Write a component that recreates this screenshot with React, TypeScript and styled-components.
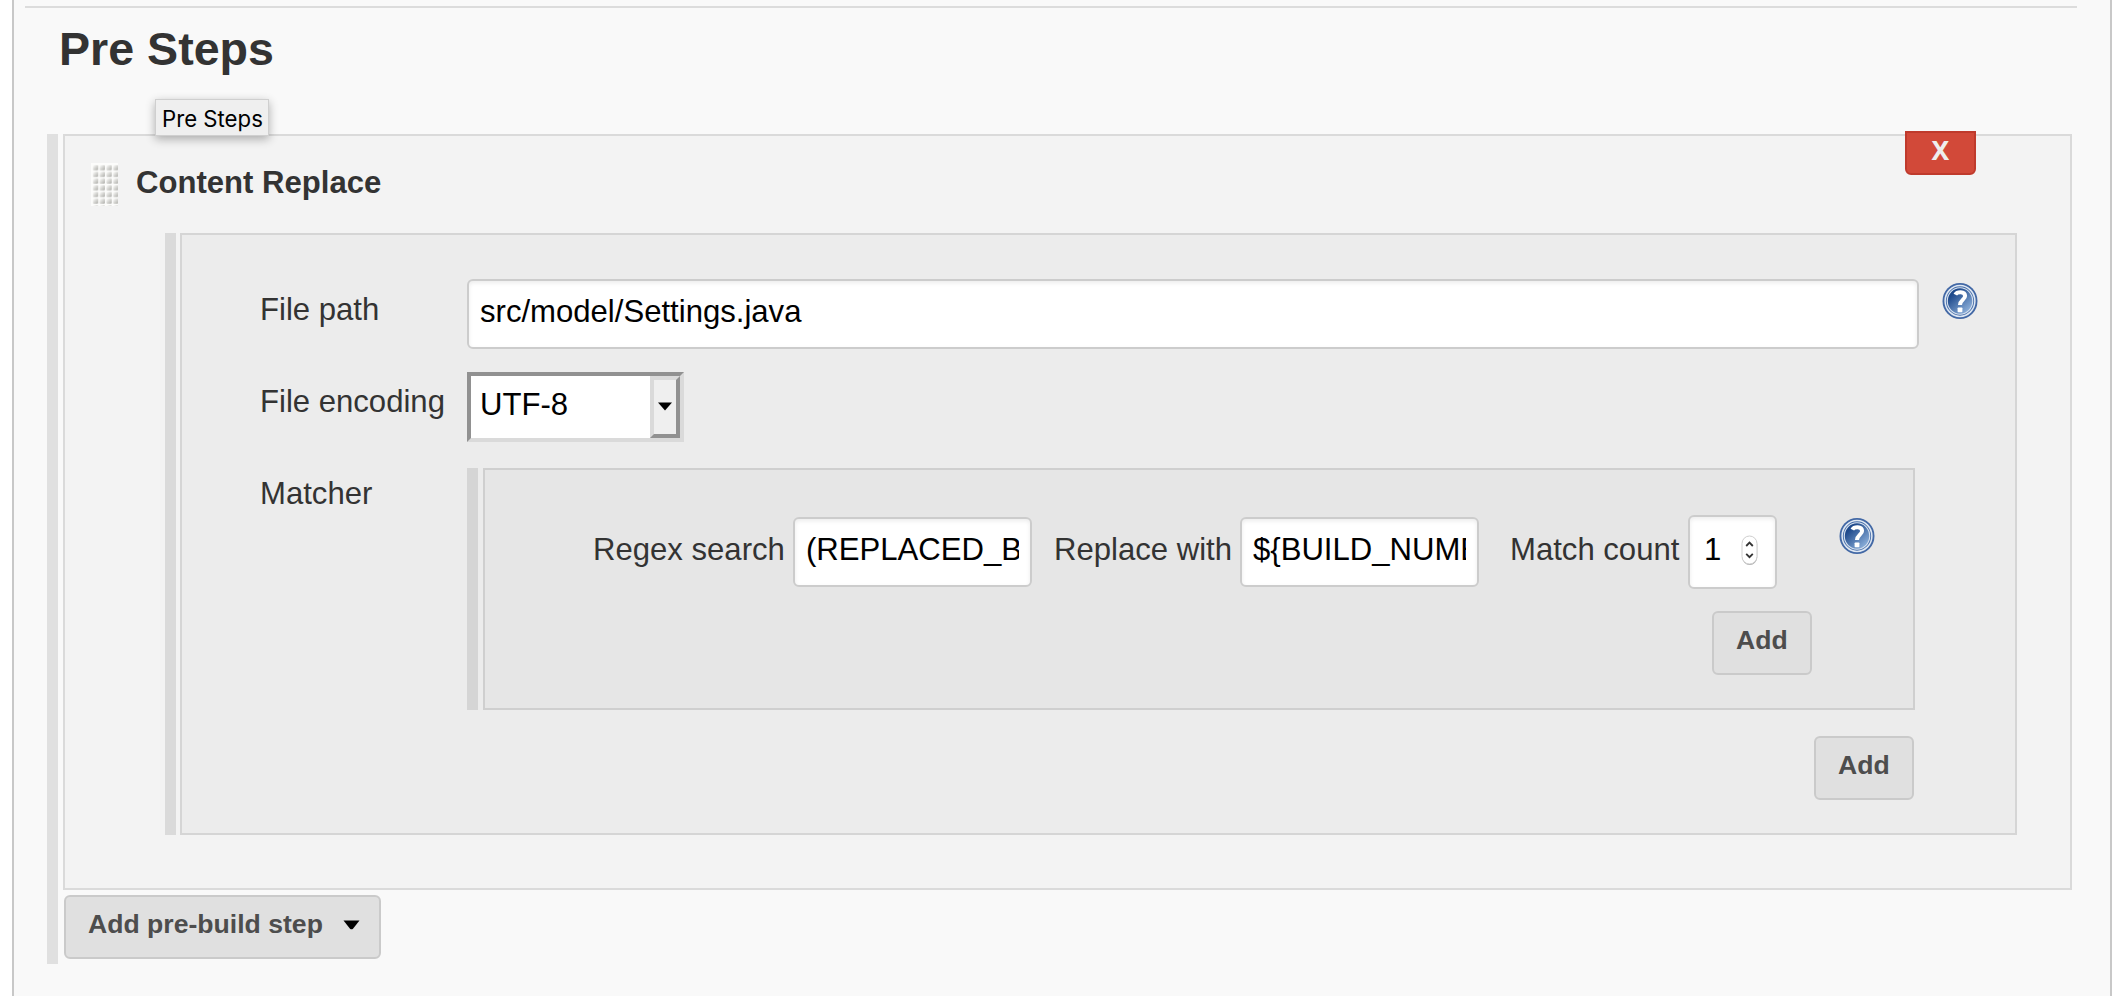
import React from "react";
import styled, { createGlobalStyle } from "styled-components";

const GlobalStyle = createGlobalStyle`
  *, *::before, *::after { box-sizing: border-box; }
  body {
    margin: 0;
    background: #fff;
    color: #333;
    font-family: "Liberation Sans", Helvetica, Arial, sans-serif;
    font-size: 31.1px;
    line-height: 36px;
    overflow: hidden;
  }
`;

const Page = styled.main`
  height: 996px;
  margin-left: 12px;
  padding: 6px 33px 0 11px;
  border: solid #c8c8c8;
  border-width: 0 2px;
  background: #f9f9f9;
`;

const SectionHeader = styled.header`
  position: relative;
  height: 128px;
  padding: 14px 0 0 34px;
  border-top: 2px solid #dcdcdc;
`;

const Title = styled.h1`
  margin: 0;
  font-size: 46.6px;
  line-height: 54px;
`;

const Tooltip = styled.div`
  position: absolute;
  z-index: 2;
  top: 91px;
  left: 130px;
  width: 114px;
  height: 37px;
  padding-left: 6px;
  border: 1px solid #cfcfcf;
  background: #efefef;
  box-shadow: 0 3px 9px rgba(0, 0, 0, 0.3);
  color: #000;
  font: 22.2px/37px Inter, sans-serif;
  white-space: nowrap;
`;

const Steps = styled.section`
  width: 2025px;
  height: 830px;
  margin-left: 22px;
  padding-left: 5px;
  border-left: 11px solid #e0e0e0;
`;

const StepCard = styled.article`
  position: relative;
  height: 756px;
  border: 2px solid #dadada;
  background: #f3f3f3;
`;

const DeleteButton = styled.button`
  position: absolute;
  top: -5px;
  right: 94px;
  width: 71px;
  height: 44px;
  padding: 0 0 6px;
  border: 2px solid #bf3a2c;
  border-radius: 0 0 6px 6px;
  background: #d24939;
  color: #eee;
  font: bold 26.5px/34px "Noto Sans", sans-serif;
`;

const StepHeader = styled.div`
  display: flex;
  height: 97px;
  padding: 27px 0 0 26px;
`;

const StepName = styled.h2`
  margin: 2px 0 0 18px;
  font-size: 31.1px;
  line-height: 36px;
`;

const Nested = styled.div<{ $bar: string; $gap: number }>`
  border-left: 11px solid ${(p) => p.$bar};
  padding-left: ${(p) => p.$gap}px;
`;

const NestedStep = styled(Nested)`
  width: 1852px;
  margin-left: 100px;
`;

const StepBody = styled.div`
  height: 602px;
  padding: 44px 0 0 78px;
  border: 2px solid #d5d5d5;
  background: #ececec;
`;

const FormRow = styled.div<{ $height: number }>`
  display: grid;
  grid-template-columns: 207px 1452px 1fr;
  align-items: start;
  height: ${(p) => p.$height}px;
`;

const Label = styled.span<{ $top: number }>`
  padding-top: ${(p) => p.$top}px;
`;

const TextInput = styled.input`
  display: block;
  width: 100%;
  height: 70px;
  padding: 0 11px 5px;
  border: 2px solid #ccc;
  border-radius: 6px;
  outline: none;
  background: #fff;
  box-shadow: inset 0 2px 4px rgba(0, 0, 0, 0.08);
  color: #000;
  font: 31.1px "Liberation Sans", Arial, sans-serif;
`;

const HelpSlot = styled.div`
  padding: 4px 0 0 23px;
  line-height: 0;
`;

const SelectBox = styled.div`
  display: flex;
  width: 217px;
  height: 70px;
  border: 4px solid;
  border-color: #919191 #dadada #dadada #919191;
  background: #fff;
  color: #000;
`;

const SelectValue = styled.span`
  flex: 1;
  padding: 11px 0 0 9px;
`;

const SelectArrow = styled.span`
  display: flex;
  align-items: center;
  justify-content: center;
  width: 30px;
  padding-bottom: 2px;
  border: 4px solid;
  border-color: #dadada #919191 #919191 #dadada;
  background: #efefef;
`;

const MatcherGroup = styled(Nested)`
  margin-right: 4px;
`;

const MatcherBody = styled.div`
  height: 242px;
  padding: 45px 0 0 108px;
  border: 2px solid #cfcfcf;
  background: #e6e6e6;
`;

const MatcherFields = styled.div`
  display: flex;
  height: 96px;
`;

const FieldLabel = styled.span<{ $width: number }>`
  width: ${(p) => p.$width}px;
  flex: none;
  padding-top: 17px;
  white-space: nowrap;
`;

const ShortInput = styled.div<{ $after: number }>`
  flex: none;
  width: 239px;
  margin: 2px ${(p) => p.$after}px 0 0;
`;

const NumberInput = styled.div`
  display: flex;
  flex: none;
  width: 89px;
  height: 74px;
  margin-right: 62px;
  padding: 15px 0 0 14px;
  border: 2px solid #ccc;
  border-radius: 6px;
  background: #fff;
  box-shadow: inset 0 2px 4px rgba(0, 0, 0, 0.08);
  color: #000;
`;

const Spinner = styled.svg`
  flex: none;
  margin: 3px 0 0 20px;
`;

const MatcherHelp = styled.div`
  padding-top: 3px;
  line-height: 0;
`;

const Button = styled.button<{ $width: number }>`
  display: flex;
  align-items: center;
  width: ${(p) => p.$width}px;
  height: 64px;
  padding: 0 0 5px 22px;
  border: 2px solid #cacaca;
  border-radius: 6px;
  background: #e0e0e0;
  color: #4d4d4d;
  font: bold 26.6px "Liberation Sans", Arial, sans-serif;
  white-space: nowrap;
`;

const ButtonLine = styled.div<{ $right: number; $top: number }>`
  display: flex;
  justify-content: flex-end;
  padding: ${(p) => p.$top}px ${(p) => p.$right}px 0 0;
`;

const AddStepLine = styled.div`
  padding: 5px 0 0 1px;
`;

const Caret = styled.svg`
  flex: none;
  margin: 1px 0 0 20px;
`;

const HelpIcon = () => (
  <svg width="36" height="36" viewBox="0 0 35 36">
    <defs>
      <linearGradient id="help-fill" x1="0.15" y1="0.1" x2="0.85" y2="0.9">
        <stop offset="0.15" stopColor="#1f4a8c" />
        <stop offset="1" stopColor="#8fb2dc" />
      </linearGradient>
    </defs>
    <ellipse cx="17.5" cy="18" rx="17.5" ry="18" fill="#4268a5" />
    <ellipse cx="17.5" cy="18" rx="14.9" ry="15.4" fill="#4a70ab" stroke="#dfe8f3" strokeWidth="1.5" />
    <ellipse cx="17.5" cy="18" rx="12.7" ry="13.2" fill="url(#help-fill)" stroke="#d5e0ee" strokeWidth="1.1" />
    <path d="M12.8 11.6C14.4 8.6 22.4 7.8 22.6 12.8C22.7 16.6 17.7 16.8 17.5 22" fill="none" stroke="#fff" strokeWidth="4" />
    <rect x="15.1" y="24.4" width="4.8" height="4.8" rx="0.8" fill="#fff" />
  </svg>
);

const DragHandle = () => (
  <svg width="27" height="43" viewBox="0 0 27 43">
    <defs>
      <linearGradient id="grip-dot" x1="0" y1="0" x2="1" y2="1">
        <stop offset="0.1" stopColor="#f8f8f6" />
        <stop offset="0.85" stopColor="#b8b8b4" />
      </linearGradient>
      <pattern id="grip" x="1.5" y="1.8" width="6.75" height="6.7" patternUnits="userSpaceOnUse">
        <rect x="0.4" y="0.2" width="5.3" height="5.2" rx="0.8" fill="url(#grip-dot)" />
      </pattern>
    </defs>
    <rect width="27" height="43" fill="#fcfcfb" />
    <rect x="1.5" y="1.8" width="25.5" height="41.2" fill="url(#grip)" />
  </svg>
);

export default function App() {
  return (
    <>
      <GlobalStyle />
      <Page>
        <SectionHeader>
          <Title>Pre Steps</Title>
          <Tooltip>Pre Steps</Tooltip>
        </SectionHeader>
        <Steps>
          <StepCard>
            <DeleteButton>X</DeleteButton>
            <StepHeader>
              <DragHandle />
              <StepName>Content Replace</StepName>
            </StepHeader>
            <NestedStep $bar="#dadada" $gap={4}>
              <StepBody>
                <FormRow $height={93}>
                  <Label $top={13}>File path</Label>
                  <TextInput defaultValue="src/model/Settings.java" />
                  <HelpSlot>
                    <HelpIcon />
                  </HelpSlot>
                </FormRow>
                <FormRow $height={96}>
                  <Label $top={12}>File encoding</Label>
                  <SelectBox>
                    <SelectValue>UTF-8</SelectValue>
                    <SelectArrow>
                      <svg width="14" height="9" viewBox="0 0 14 9">
                        <path d="M0 0.5H14L7 8.5Z" fill="#000" />
                      </svg>
                    </SelectArrow>
                  </SelectBox>
                </FormRow>
                <FormRow $height={242}>
                  <Label $top={8}>Matcher</Label>
                  <MatcherGroup $bar="#d5d5d5" $gap={5}>
                    <MatcherBody>
                      <MatcherFields>
                        <FieldLabel $width={200}>Regex search</FieldLabel>
                        <ShortInput $after={22}>
                          <TextInput defaultValue="(REPLACED_BUILD_NUMBER)" />
                        </ShortInput>
                        <FieldLabel $width={186}>Replace with</FieldLabel>
                        <ShortInput $after={31}>
                          <TextInput defaultValue="${BUILD_NUMBER}" />
                        </ShortInput>
                        <FieldLabel $width={178}>Match count</FieldLabel>
                        <NumberInput>
                          1
                          <Spinner width="18" height="31" viewBox="0 0 18 31">
                            <rect x="1.2" y="2" width="15" height="28" rx="7.5" fill="#aaa" />
                            <rect x="1" y="1" width="15" height="28" rx="7.5" fill="#fff" stroke="#cfcfcf" />
                            <path d="M5.2 11L8.5 7.6L11.8 11M5.2 18.8L8.5 22.2L11.8 18.8" fill="none" stroke="#333" strokeWidth="1.8" />
                          </Spinner>
                        </NumberInput>
                        <MatcherHelp>
                          <HelpIcon />
                        </MatcherHelp>
                      </MatcherFields>
                      <ButtonLine $top={0} $right={101}>
                        <Button $width={100}>Add</Button>
                      </ButtonLine>
                    </MatcherBody>
                  </MatcherGroup>
                </FormRow>
                <ButtonLine $top={26} $right={101}>
                  <Button $width={100}>Add</Button>
                </ButtonLine>
              </StepBody>
            </NestedStep>
          </StepCard>
          <AddStepLine>
            <Button $width={317}>
              Add pre-build step
              <Caret width="17" height="10" viewBox="0 0 17 10">
                <path d="M0.5 0.5H16.5L10 8.8Q8.5 9.8 7 8.8Z" fill="#000" />
              </Caret>
            </Button>
          </AddStepLine>
        </Steps>
      </Page>
    </>
  );
}
